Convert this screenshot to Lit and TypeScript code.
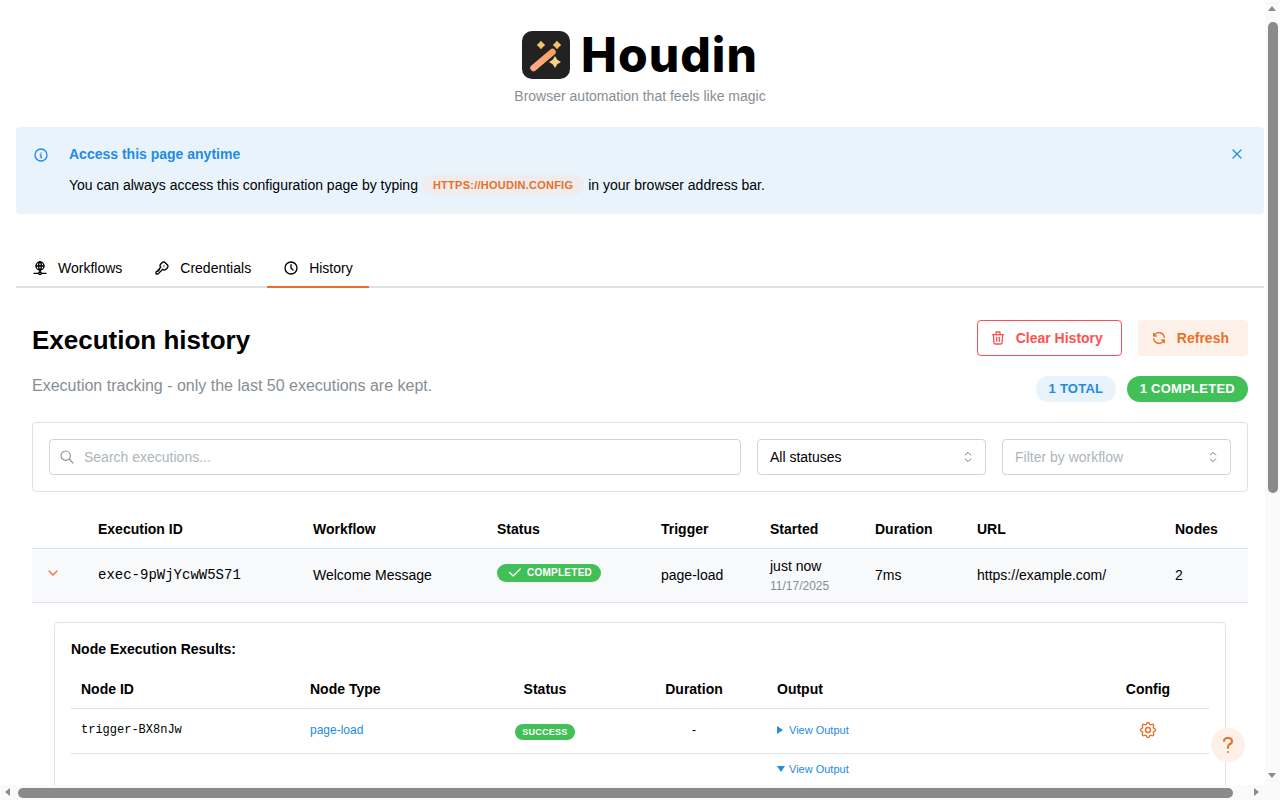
import { LitElement, html, css, svg } from "lit";
import { customElement } from "lit/decorators.js";

const ic = (paths: unknown, size: number, sw = 2) => html`<svg class="ic" width=${size} height=${size} viewBox="0 0 24 24" fill="none" stroke="currentColor" stroke-width=${sw} stroke-linecap="round" stroke-linejoin="round">${paths}</svg>`;

const P = {
  network: svg`<path d="M6 9a6 6 0 1 0 12 0a6 6 0 0 0 -12 0"/><path d="M12 3c1.333 .333 2 2.333 2 6s-.667 5.667 -2 6"/><path d="M12 3c-1.333 .333 -2 2.333 -2 6s.667 5.667 2 6"/><path d="M6 9h12"/><path d="M3 20h7"/><path d="M14 20h7"/><path d="M10 20a2 2 0 1 0 4 0a2 2 0 0 0 -4 0"/><path d="M12 15v3"/>`,
  key: svg`<path d="M16.555 3.843l3.602 3.602a2.877 2.877 0 0 1 0 4.069l-2.643 2.643a2.877 2.877 0 0 1 -4.069 0l-.301 -.301l-6.558 6.558a2 2 0 0 1 -1.239 .578l-.175 .008h-1.172a1 1 0 0 1 -.993 -.883l-.007 -.117v-1.172a2 2 0 0 1 .467 -1.284l.119 -.13l.414 -.414h2v-2h2v-2l2.144 -2.144l-.301 -.301a2.877 2.877 0 0 1 0 -4.069l2.643 -2.643a2.877 2.877 0 0 1 4.069 0z"/><path d="M15 9h.01"/>`,
  clock: svg`<circle cx="12" cy="12" r="9"/><path d="M12 7v5l3 3"/>`,
  info: svg`<circle cx="12" cy="12" r="9"/><path d="M12 9h.01"/><path d="M11 12h1v4h1"/>`,
  x: svg`<path d="M18 6L6 18"/><path d="M6 6l12 12"/>`,
  trash: svg`<path d="M4 7h16"/><path d="M10 11v6"/><path d="M14 11v6"/><path d="M5 7l1 12a2 2 0 0 0 2 2h8a2 2 0 0 0 2 -2l1 -12"/><path d="M9 7v-3a1 1 0 0 1 1 -1h4a1 1 0 0 1 1 1v3"/>`,
  refresh: svg`<path d="M20 11a8.1 8.1 0 0 0 -15.5 -2m-.5 -4v4h4"/><path d="M4 13a8.1 8.1 0 0 0 15.5 2m.5 4v-4h-4"/>`,
  search: svg`<circle cx="10" cy="10" r="7"/><path d="M21 21l-6 -6"/>`,
  selector: svg`<path d="M8 9l4 -4l4 4"/><path d="M16 15l-4 4l-4 -4"/>`,
  chevron: svg`<path d="M6 9l6 6l6 -6"/>`,
  check: svg`<path d="M5 12l5 5l10 -10"/>`,
  gear: svg`<path d="M10.325 4.317c.426 -1.756 2.924 -1.756 3.35 0a1.724 1.724 0 0 0 2.573 1.066c1.543 -.94 3.31 .826 2.37 2.37a1.724 1.724 0 0 0 1.065 2.572c1.756 .426 1.756 2.924 0 3.35a1.724 1.724 0 0 0 -1.066 2.573c.94 1.543 -.826 3.31 -2.37 2.37a1.724 1.724 0 0 0 -2.572 1.065c-.426 1.756 -2.924 1.756 -3.35 0a1.724 1.724 0 0 0 -2.573 -1.066c-1.543 .94 -3.31 -.826 -2.37 -2.37a1.724 1.724 0 0 0 -1.065 -2.572c-1.756 -.426 -1.756 -2.924 0 -3.35a1.724 1.724 0 0 0 1.066 -2.573c-.94 -1.543 .826 -3.31 2.37 -2.37c1 .608 2.296 .07 2.572 -1.065z"/><circle cx="12" cy="12" r="3"/>`,
  help: svg`<path d="M8 8a3.5 3 0 0 1 3.5 -3h1a3.5 3 0 0 1 3.5 3a3 3 0 0 1 -2 3a3 4 0 0 0 -2 4"/><path d="M12 19v.01"/>`,
};

const logo = html`<svg width="48" height="48" viewBox="0 0 48 48">
  <defs><linearGradient id="w" gradientUnits="userSpaceOnUse" x1="10" y1="37" x2="31" y2="20"><stop offset="0" stop-color="#ffa88a"/><stop offset="1" stop-color="#f9a35f"/></linearGradient></defs>
  <rect width="48" height="48" rx="10" fill="#222"/>
  <path d="M11.5 37L30.5 21" stroke="url(#w)" stroke-width="6.5" stroke-linecap="round"/>
  <path d="M19 9.8l2 2.2 2.2 2-2.2 2-2 2.2-2-2.2-2.2-2 2.2-2zM35 9.8l2 2.2 2.2 2-2.2 2-2 2.2-2-2.2-2.2-2 2.2-2z" fill="#f5c469"/>
  <path d="M33 25l2.3 3.7 3.7 2.3-3.7 2.3-2.3 3.7-2.3-3.7-3.7-2.3 3.7-2.3z" fill="#f9d08a"/>
</svg>`;

@customElement("app-root")
export class AppRoot extends LitElement {
  static styles = css`
    :host { display: block; font-family: "Liberation Sans", Arial, sans-serif; color: #000; font-size: 14px; }
    .ic { display: block; flex: none; }
    .page { padding: 0 16px 16px; }
    .brand { display: flex; flex-direction: column; align-items: center; padding-top: 31px; }
    .brand-row { display: flex; align-items: center; gap: 11px; height: 48px; }
    .brand-name { font-family: Inter, sans-serif; font-weight: 800; font-size: 48px; line-height: 48px; letter-spacing: 1px; color: #000; }
    .tagline { margin-top: 9px; color: #868e96; font-size: 14px; line-height: 16px; }

    .alert { margin-top: 23px; height: 87px; box-sizing: border-box; background: #e8f3fc; border-radius: 4px; padding: 16px 19px 16px 17px; display: flex; gap: 20px; }
    .alert-icon { color: #228be6; padding-top: 4px; }
    .alert-body { flex: 1; }
    .alert-title { color: #228be6; font-weight: 700; font-size: 14px; line-height: 22px; }
    .alert-text { margin-top: 10px; line-height: 20px; display: flex; align-items: center; gap: 4px; }
    .code { background: #eeecec; color: #e8702a; font-weight: 700; font-size: 11px; border-radius: 10px; height: 20px; line-height: 20px; padding: 0 11px; letter-spacing: .25px; }
    .alert-close { color: #228be6; padding-top: 3px; }

    .tabs { margin-top: 36px; display: flex; border-bottom: 2px solid #dee2e6; height: 36px; }
    .tab { display: flex; align-items: center; gap: 10px; padding: 0 16px; height: 36px; margin-bottom: -2px; box-sizing: content-box; border-bottom: 2px solid transparent; line-height: 20px; }
    .tab.on { border-bottom-color: #e8702a; }

    .panel { padding: 32px 16px 0; }
    .head { display: flex; justify-content: space-between; }
    .h-title { font-size: 26px; font-weight: 700; line-height: 40px; margin: 0; }
    .h-sub { color: #868e96; font-size: 16px; line-height: 20px; margin-top: 16px; }
    .actions { display: flex; gap: 16px; }
    .btn { height: 36px; box-sizing: border-box; border-radius: 4px; display: flex; align-items: center; gap: 10px; font-weight: 700; font-size: 14px; padding: 0 18px 0 12px; }
    .btn.red { border: 1px solid #fa5252; color: #fa5252; }
    .btn.orange { background: #fdf0e9; color: #e8702a; padding: 0 19px 0 13px; }
    .badges { display: flex; justify-content: flex-end; gap: 11px; margin-top: 20px; }
    .pill { height: 26px; line-height: 26px; border-radius: 13px; font-size: 13px; font-weight: 700; letter-spacing: .25px; padding: 0 13px; }
    .pill.blue { background: #e8f3fc; color: #228be6; padding: 0 12.5px; }
    .pill.green { background: #40c057; color: #fff; }

    .filters { margin-top: 20px; border: 1px solid #dee2e6; border-radius: 4px; padding: 16px; display: flex; gap: 16px; }
    .field { height: 36px; box-sizing: border-box; border: 1px solid #ced4da; border-radius: 4px; display: flex; align-items: center; padding: 0 12px; font-size: 14px; }
    .field.search { flex: 1; padding-left: 9px; gap: 9px; color: #adb5bd; }
    .field.search .ic { color: #868e96; }
    .field.sel { width: 229px; justify-content: space-between; padding-right: 9px; }
    .field.sel .ic { color: #777; }
    .ph { color: #adb5bd; }

    table { border-collapse: collapse; table-layout: fixed; width: 100%; }
    .main { margin-top: 18px; }
    .main th { text-align: left; font-size: 14px; font-weight: 700; padding: 0 16px; height: 38px; border-bottom: 1px solid #dee2e6; }
    .main .row td { background: #f8f9fa; height: 54px; padding: 0 16px 2px; box-sizing: border-box; font-size: 14px; border-bottom: 1px solid #dee2e6; vertical-align: middle; }
    .chev { color: #e8702a; margin-left: -3px; margin-top: -4px; }
    .mono { font-family: "Liberation Mono", monospace; }
    .status { display: inline-flex; align-items: center; gap: 4.5px; height: 18px; background: #40c057; color: #fff; border-radius: 9px; font-size: 10px; font-weight: 700; letter-spacing: .25px; padding: 0 9px 1px 8.5px; box-sizing: border-box; margin-top: -6px; vertical-align: middle; }
    .when { line-height: 16px; margin-top: 3px; }
    .date { color: #868e96; font-size: 12px; line-height: 16px; margin-top: 4px; }

    .detail-cell { padding: 19px 22px 20px 22px; }
    .card { border: 1px solid #dee2e6; border-radius: 4px; padding: 16px; }
    .card-title { font-weight: 700; font-size: 14px; line-height: 20px; }
    .nodes { margin-top: 10px; }
    .nodes th { font-size: 14px; font-weight: 700; padding: 0 10px; height: 39px; text-align: left; border-bottom: 1px solid #dee2e6; }
    .nodes td { padding: 0 10px 2px; border-bottom: 1px solid #dee2e6; font-size: 12px; height: 42px; vertical-align: middle; }
    .nodes .c { text-align: center; }
    .nodes .top { vertical-align: top; padding-top: 8px; }
    .link { color: #228be6; }
    .ok { display: inline-block; height: 16px; line-height: 16px; border-radius: 8px; background: #40c057; color: #fff; font-size: 9px; font-weight: 700; letter-spacing: .25px; padding: 0 7px; vertical-align: middle; margin-top: 3px; }
    .view { display: flex; align-items: center; gap: 6px; color: #228be6; font-size: 11px; line-height: 14px; }
    .tri-r { width: 0; height: 0; border-left: 6px solid #228be6; border-top: 4px solid transparent; border-bottom: 4px solid transparent; }
    .tri-d { width: 0; height: 0; border-top: 6px solid #228be6; border-left: 4px solid transparent; border-right: 4px solid transparent; margin-right: -2px; }
    .out { height: 440px; }
    .gear { color: #e8702a; display: flex; justify-content: center; }

    .help { position: fixed; left: 1211px; top: 728px; width: 34px; height: 34px; border-radius: 50%; background: #fdf0e9; color: #e8702a; display: flex; align-items: center; justify-content: center; }

    .sb { position: fixed; background: #fafafa; }
    .sb-v { left: 1265px; top: 0; width: 15px; height: 800px; }
    .sb-h { left: 0; top: 785px; width: 1280px; height: 15px; }
    .thumb { position: absolute; background: #8a8a8a; border-radius: 5px; }
    .thumb-v { left: 3px; top: 22px; width: 9.5px; height: 471px; }
    .thumb-h { left: 18px; top: 3px; width: 1215px; height: 9.5px; }
    .arrow { position: absolute; width: 0; height: 0; }
    .a-up { left: 3px; top: 6px; border-left: 4.5px solid transparent; border-right: 4.5px solid transparent; border-bottom: 5px solid #8a8a8a; }
    .a-down { left: 3px; top: 773px; border-left: 4.5px solid transparent; border-right: 4.5px solid transparent; border-top: 5px solid #8a8a8a; }
    .a-left { left: 5px; top: 3px; border-top: 4.5px solid transparent; border-bottom: 4.5px solid transparent; border-right: 5px solid #8a8a8a; }
    .a-right { left: 1254px; top: 3px; border-top: 4.5px solid transparent; border-bottom: 4.5px solid transparent; border-left: 5px solid #8a8a8a; }
  `;

  render() {
    return html`
      <div class="page">
        <header class="brand">
          <div class="brand-row">${logo}<span class="brand-name">Houdin</span></div>
          <div class="tagline">Browser automation that feels like magic</div>
        </header>

        <section class="alert">
          <div class="alert-icon">${ic(P.info, 16, 2)}</div>
          <div class="alert-body">
            <div class="alert-title">Access this page anytime</div>
            <div class="alert-text">You can always access this configuration page by typing <span class="code">HTTPS://HOUDIN.CONFIG</span> in your browser address bar.</div>
          </div>
          <div class="alert-close">${ic(P.x, 16, 1.8)}</div>
        </section>

        <nav class="tabs">
          <div class="tab">${ic(P.network, 16, 2)}Workflows</div>
          <div class="tab">${ic(P.key, 16, 2)}Credentials</div>
          <div class="tab on">${ic(P.clock, 16, 2)}History</div>
        </nav>

        <main class="panel">
          <div class="head">
            <div>
              <h1 class="h-title">Execution history</h1>
              <div class="h-sub">Execution tracking - only the last 50 executions are kept.</div>
            </div>
            <div>
              <div class="actions">
                <div class="btn red">${ic(P.trash, 16, 2)}Clear History</div>
                <div class="btn orange">${ic(P.refresh, 16, 2)}Refresh</div>
              </div>
              <div class="badges">
                <span class="pill blue">1 TOTAL</span>
                <span class="pill green">1 COMPLETED</span>
              </div>
            </div>
          </div>

          <div class="filters">
            <div class="field search">${ic(P.search, 16, 1.7)}<span>Search executions...</span></div>
            <div class="field sel"><span>All statuses</span>${ic(P.selector, 16, 1.5)}</div>
            <div class="field sel"><span class="ph">Filter by workflow</span>${ic(P.selector, 16, 1.5)}</div>
          </div>

          <table class="main">
            <colgroup><col style="width:50px"><col style="width:215px"><col style="width:184px"><col style="width:164px"><col style="width:109px"><col style="width:105px"><col style="width:102px"><col style="width:198px"><col style="width:89px"></colgroup>
            <thead><tr><th></th><th>Execution ID</th><th>Workflow</th><th>Status</th><th>Trigger</th><th>Started</th><th>Duration</th><th>URL</th><th>Nodes</th></tr></thead>
            <tbody>
              <tr class="row">
                <td><div class="chev">${ic(P.chevron, 16, 1.8)}</div></td>
                <td class="mono">exec-9pWjYcwW5S71</td>
                <td>Welcome Message</td>
                <td><span class="status">${ic(P.check, 17, 1.8)}COMPLETED</span></td>
                <td>page-load</td>
                <td><div class="when">just now</div><div class="date">11/17/2025</div></td>
                <td>7ms</td>
                <td>https://example.com/</td>
                <td>2</td>
              </tr>
              <tr><td colspan="9" class="detail-cell">
                <div class="card">
                  <div class="card-title">Node Execution Results:</div>
                  <table class="nodes">
                    <colgroup><col style="width:229px"><col style="width:169px"><col style="width:152px"><col style="width:146px"><col style="width:320px"><col style="width:122px"></colgroup>
                    <thead><tr><th>Node ID</th><th>Node Type</th><th class="c">Status</th><th class="c">Duration</th><th>Output</th><th class="c">Config</th></tr></thead>
                    <tbody>
                      <tr>
                        <td class="mono">trigger-BX8nJw</td>
                        <td class="link">page-load</td>
                        <td class="c"><span class="ok">SUCCESS</span></td>
                        <td class="c">-</td>
                        <td><div class="view"><span class="tri-r"></span>View Output</div></td>
                        <td><div class="gear">${ic(P.gear, 20, 1.7)}</div></td>
                      </tr>
                      <tr>
                        <td></td><td></td><td></td><td></td>
                        <td class="top">
                          <div class="view"><span class="tri-d"></span>View Output</div>
                          <div class="out"></div>
                        </td>
                        <td></td>
                      </tr>
                    </tbody>
                  </table>
                </div>
              </td></tr>
            </tbody>
          </table>
        </main>
      </div>
      <div class="help">${ic(P.help, 24, 2)}</div>
      <div class="sb sb-v"><div class="arrow a-up"></div><div class="thumb thumb-v"></div><div class="arrow a-down"></div></div>
      <div class="sb sb-h"><div class="arrow a-left"></div><div class="thumb thumb-h"></div><div class="arrow a-right"></div></div>
    `;
  }
}
